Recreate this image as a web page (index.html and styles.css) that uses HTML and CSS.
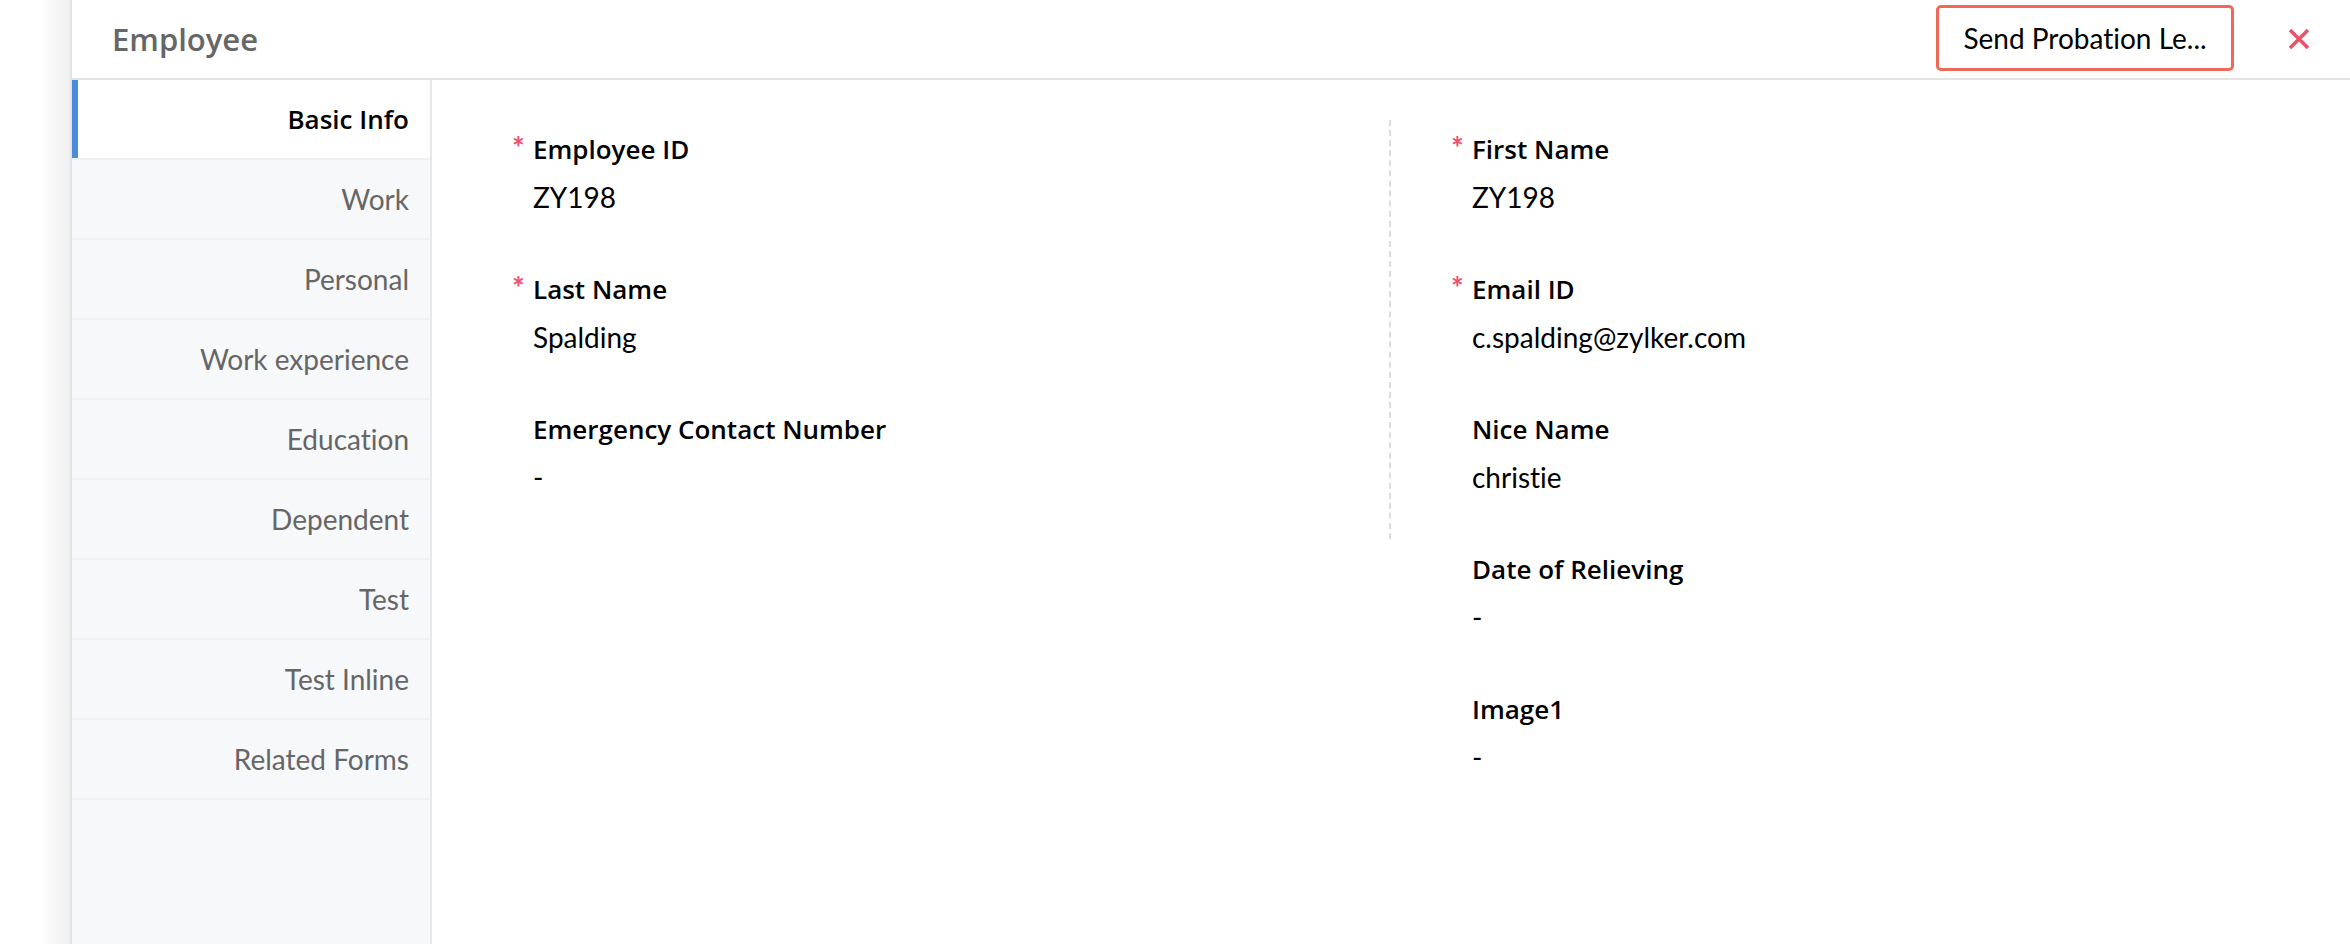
FILE: index.html
```html
<!DOCTYPE html>
<html lang="en">
<head>
  <meta charset="UTF-8">
  <title>Employee</title>
  <link rel="stylesheet" href="styles.css">
</head>
<body>
  <div class="page">
    <div class="panel">

      <!-- Header with title and actions -->
      <div class="panel-header">
        <h2 class="title">Employee</h2>
        <button class="btn-outline">Send Probation Le...</button>
        <span class="close">
          <svg width="22" height="22" viewBox="0 0 22 22">
            <path d="M2 2 L20 20 M20 2 L2 20" stroke="#e9546b" stroke-width="3.6" fill="none"/>
          </svg>
        </span>
      </div>

      <div class="panel-body">
        <!-- Section tabs -->
        <ul class="tabs">
          <li class="tab active">Basic Info</li>
          <li class="tab">Work</li>
          <li class="tab">Personal</li>
          <li class="tab">Work experience</li>
          <li class="tab">Education</li>
          <li class="tab">Dependent</li>
          <li class="tab">Test</li>
          <li class="tab">Test Inline</li>
          <li class="tab">Related Forms</li>
        </ul>

        <!-- Record details -->
        <div class="details">
          <div class="col col-left">
            <div class="field">
              <div class="label req">Employee ID</div>
              <div class="value">ZY198</div>
            </div>
            <div class="field">
              <div class="label req">Last Name</div>
              <div class="value">Spalding</div>
            </div>
            <div class="field">
              <div class="label">Emergency Contact Number</div>
              <div class="value">-</div>
            </div>
          </div>
          <div class="col col-right">
            <div class="field">
              <div class="label req">First Name</div>
              <div class="value">ZY198</div>
            </div>
            <div class="field">
              <div class="label req">Email ID</div>
              <div class="value">c.spalding@zylker.com</div>
            </div>
            <div class="field">
              <div class="label">Nice Name</div>
              <div class="value">christie</div>
            </div>
            <div class="field">
              <div class="label">Date of Relieving</div>
              <div class="value">-</div>
            </div>
            <div class="field">
              <div class="label">Image1</div>
              <div class="value">-</div>
            </div>
          </div>
        </div>
      </div>

    </div>
  </div>
</body>
</html>
```

FILE: styles.css
```css
body {
  margin: 0;
  background-color: #fff;
  font-family: "Lato", "Liberation Sans", sans-serif;
  font-variant-ligatures: none;
  color: #000;
}
.page {
  display: flex;
  height: 944px;
  padding-left: 70px;
  background: linear-gradient(to right, #fff 40px, #efefef 70px);
}
.panel {
  flex: 1;
  display: flex;
  flex-direction: column;
  background-color: #fff;
  border-left: 2px solid #e3e3e3;
}
.panel-header {
  display: flex;
  align-items: center;
  height: 78px;
  padding: 0 40px;
  border-bottom: 2px solid #e3e3e3;
}
.title {
  flex: 1;
  margin: 0;
  font-family: "Open Sans", sans-serif;
  font-size: 31px;
  font-weight: 600;
  color: #666;
}
.btn-outline {
  width: 298px;
  height: 66px;
  margin-top: -2px;
  padding: 0;
  background: #fff;
  border: 3px solid #ec6b58;
  border-radius: 5px;
  font-family: "Lato", sans-serif;
  font-variant-ligatures: none;
  font-size: 28px;
  color: #000;
}
.close {
  display: flex;
  margin-left: 54px;
}
.panel-body {
  flex: 1;
  display: flex;
}
.tabs {
  width: 358px;
  margin: 0;
  padding: 0;
  list-style: none;
  background-color: #f7f8fa;
  border-right: 2px solid #e8e8e8;
}
.tab {
  height: 78px;
  line-height: 78px;
  padding-right: 21px;
  text-align: right;
  font-size: 28px;
  color: #666;
  border-bottom: 2px solid #eef0f3;
}
.tab.active {
  background-color: #fff;
  color: #000;
  font-family: "Open Sans", sans-serif;
  font-weight: 600;
  font-size: 26px;
  box-shadow: inset 6px 0 0 #4a8cdb;
}
.details {
  flex: 1;
  display: grid;
  grid-template-columns: 959px 1fr;
  align-items: start;
  padding-top: 40px;
}
.col {
  display: flex;
  flex-direction: column;
  gap: 59px;
  padding-top: 14px;
}
.col-left {
  padding-left: 101px;
  padding-bottom: 44px;
  border-right: 2px dashed #dcdcdc;
}
.col-right {
  padding-left: 81px;
}
.label {
  font-family: "Open Sans", sans-serif;
  font-weight: 600;
  font-size: 26px;
  line-height: 31px;
  margin-bottom: 14px;
}
.label.req::before {
  content: "*";
  display: inline-block;
  width: 21px;
  margin-left: -21px;
  vertical-align: top;
  line-height: 26px;
  font-family: "Lato", sans-serif;
  font-weight: 700;
  font-size: 30px;
  color: #f0506e;
}
.value {
  font-size: 28px;
  line-height: 36px;
}
```
